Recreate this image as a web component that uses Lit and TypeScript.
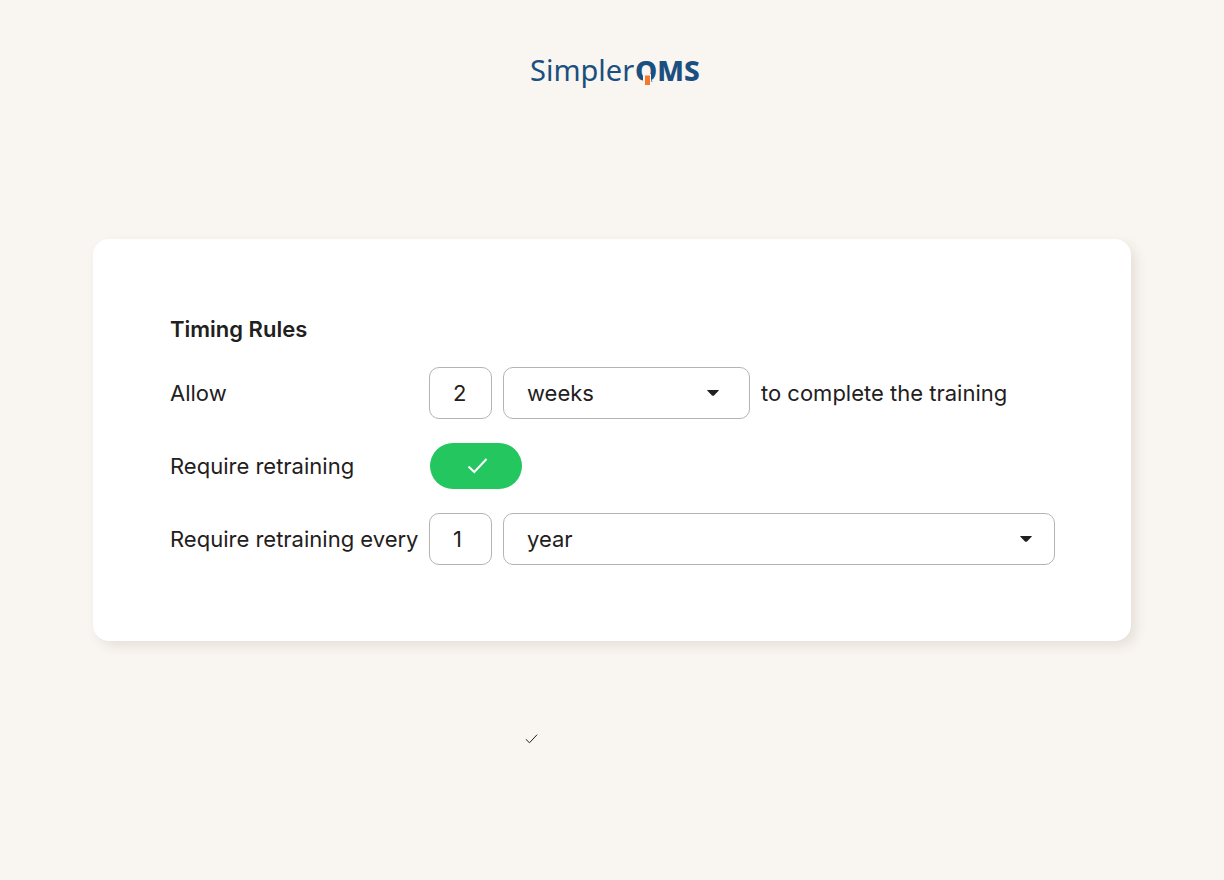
import { LitElement, html, css, svg } from "lit";
import { customElement, property, state } from "lit/decorators.js";

const tick = (width: string) => svg`<path d="M1 8.5L6.8 14L19 1" fill="none" stroke="currentColor" stroke-width=${width} />`;

@customElement("brand-logo")
class BrandLogo extends LitElement {
  static styles = css`
    :host { display: block; }
    .logo { display: block; width: 180px; height: 56px; }
    .light { font: 400 29px "Noto Sans", sans-serif; fill: #1b4f80; }
    .heavy { font: 800 28px "Noto Sans", sans-serif; fill: #1b4f80; }
    .notch { fill: #f9f5f0; }
    .tail { fill: #f5792a; }
  `;

  render() {
    return html`
      <svg class="logo" viewBox="0 0 180 56" role="img" aria-label="SimplerQMS">
        <text class="light" x="5" y="37">Simpler</text>
        <text class="heavy" x="110" y="37">QMS</text>
        <path class="notch" d="M118 30H126V37.4H134V46H118Z" />
        <rect class="tail" x="120" y="31.5" width="5" height="9.5" />
      </svg>
    `;
  }
}

@customElement("unit-select")
class UnitSelect extends LitElement {
  @property() value = "";
  @property() label = "";
  @property({ attribute: false }) options: string[] = [];

  static styles = css`
    :host { display: block; --arrow-inset: 23px; }
    .box { position: relative; display: block; }
    .select {
      appearance: none;
      box-sizing: border-box;
      width: 100%;
      height: 52px;
      padding: 0 56px 0 23px;
      border: 1px solid #b4b4b4;
      border-radius: 10px;
      background: #fff;
      color: #1f2020;
      font: 400 22px/28px Inter, sans-serif;
    }
    .arrow {
      position: absolute;
      right: var(--arrow-inset);
      top: 23px;
      width: 12px;
      height: 6px;
      fill: #1f2020;
      pointer-events: none;
    }
  `;

  render() {
    return html`
      <label class="box">
        <select class="select" aria-label=${this.label}>
          ${this.options.map((o) => html`<option ?selected=${o === this.value}>${o}</option>`)}
        </select>
        <svg class="arrow" viewBox="0 0 12 6" aria-hidden="true"><path d="M0.5 0H11.5Q12 0.3 11.6 0.8L7 5.4Q6 6.2 5 5.4L0.4 0.8Q0 0.3 0.5 0Z" /></svg>
      </label>
    `;
  }
}

@customElement("app-root")
class AppRoot extends LitElement {
  @state() retraining = true;

  static styles = css`
    :host {
      display: block;
      color: #1f2020;
      background: #f9f5f0;
      font: 400 22px/28px Inter, sans-serif;
    }
    .page {
      box-sizing: border-box;
      min-height: 100vh;
      padding: 0 93px;
      display: grid;
      grid-template-rows: 1fr auto 1fr;
    }
    .header { display: flex; justify-content: center; padding: 44px 0 0 6px; }
    .card {
      display: flex;
      flex-direction: column;
      gap: 24px;
      padding: 76px 76px 76px 77px;
      border-radius: 16px;
      background: #fff;
      box-shadow: 5px 5px 12px rgba(60, 50, 30, 0.1);
    }
    .title { margin: 0; font-size: 22px; line-height: 28px; font-weight: 600; }
    .row { display: grid; grid-template-columns: 248px 1fr; column-gap: 11px; align-items: center; }
    .name { white-space: nowrap; }
    .fields { display: flex; align-items: center; gap: 11px; }
    .number {
      box-sizing: border-box;
      width: 63px;
      height: 52px;
      padding: 0 8px 0 23px;
      border: 1px solid #b4b4b4;
      border-radius: 10px;
      background: #fff;
      color: inherit;
      font: inherit;
    }
    .short { width: 247px; --arrow-inset: 31px; }
    .wide { flex: 1; }
    .toggle { position: relative; display: block; width: 92px; height: 46px; margin-left: 1px; }
    .switch {
      appearance: none;
      display: block;
      width: 100%;
      height: 100%;
      margin: 0;
      border-radius: 23px;
      background: #c9c9c9;
    }
    .switch:checked { background: #24c660; }
    .mark { position: absolute; left: 37px; top: 15px; width: 21px; height: 16px; color: #fff; pointer-events: none; }
    .footer { padding: 93px 0 0 432px; }
    .small { display: block; width: 13px; height: 10px; color: #1f2020; }
  `;

  render() {
    return html`
      <div class="page">
        <header class="header"><brand-logo></brand-logo></header>
        <main class="card">
          <h1 class="title">Timing Rules</h1>
          <div class="row">
            <label class="name" for="allow">Allow</label>
            <div class="fields">
              <input class="number" id="allow" type="text" inputmode="numeric" value="2" />
              <unit-select class="short" label="Allowed time unit" value="weeks" .options=${["days", "weeks", "months"]}></unit-select>
              <span class="name">to complete the training</span>
            </div>
          </div>
          <div class="row">
            <label class="name" for="retraining">Require retraining</label>
            <div class="toggle">
              <input
                class="switch"
                id="retraining"
                type="checkbox"
                .checked=${this.retraining}
                @change=${(e: Event) => (this.retraining = (e.target as HTMLInputElement).checked)}
              />
              ${this.retraining ? html`<svg class="mark" viewBox="0 0 20 16" aria-hidden="true">${tick("2")}</svg>` : ""}
            </div>
          </div>
          <div class="row">
            <label class="name" for="every">Require retraining every</label>
            <div class="fields">
              <input class="number" id="every" type="text" inputmode="numeric" value="1" />
              <unit-select class="wide" label="Retraining period unit" value="year" .options=${["month", "year"]}></unit-select>
            </div>
          </div>
        </main>
        <footer class="footer">
          <svg class="small" viewBox="0 0 20 16" aria-hidden="true">${tick("1.6")}</svg>
        </footer>
      </div>
    `;
  }
}
